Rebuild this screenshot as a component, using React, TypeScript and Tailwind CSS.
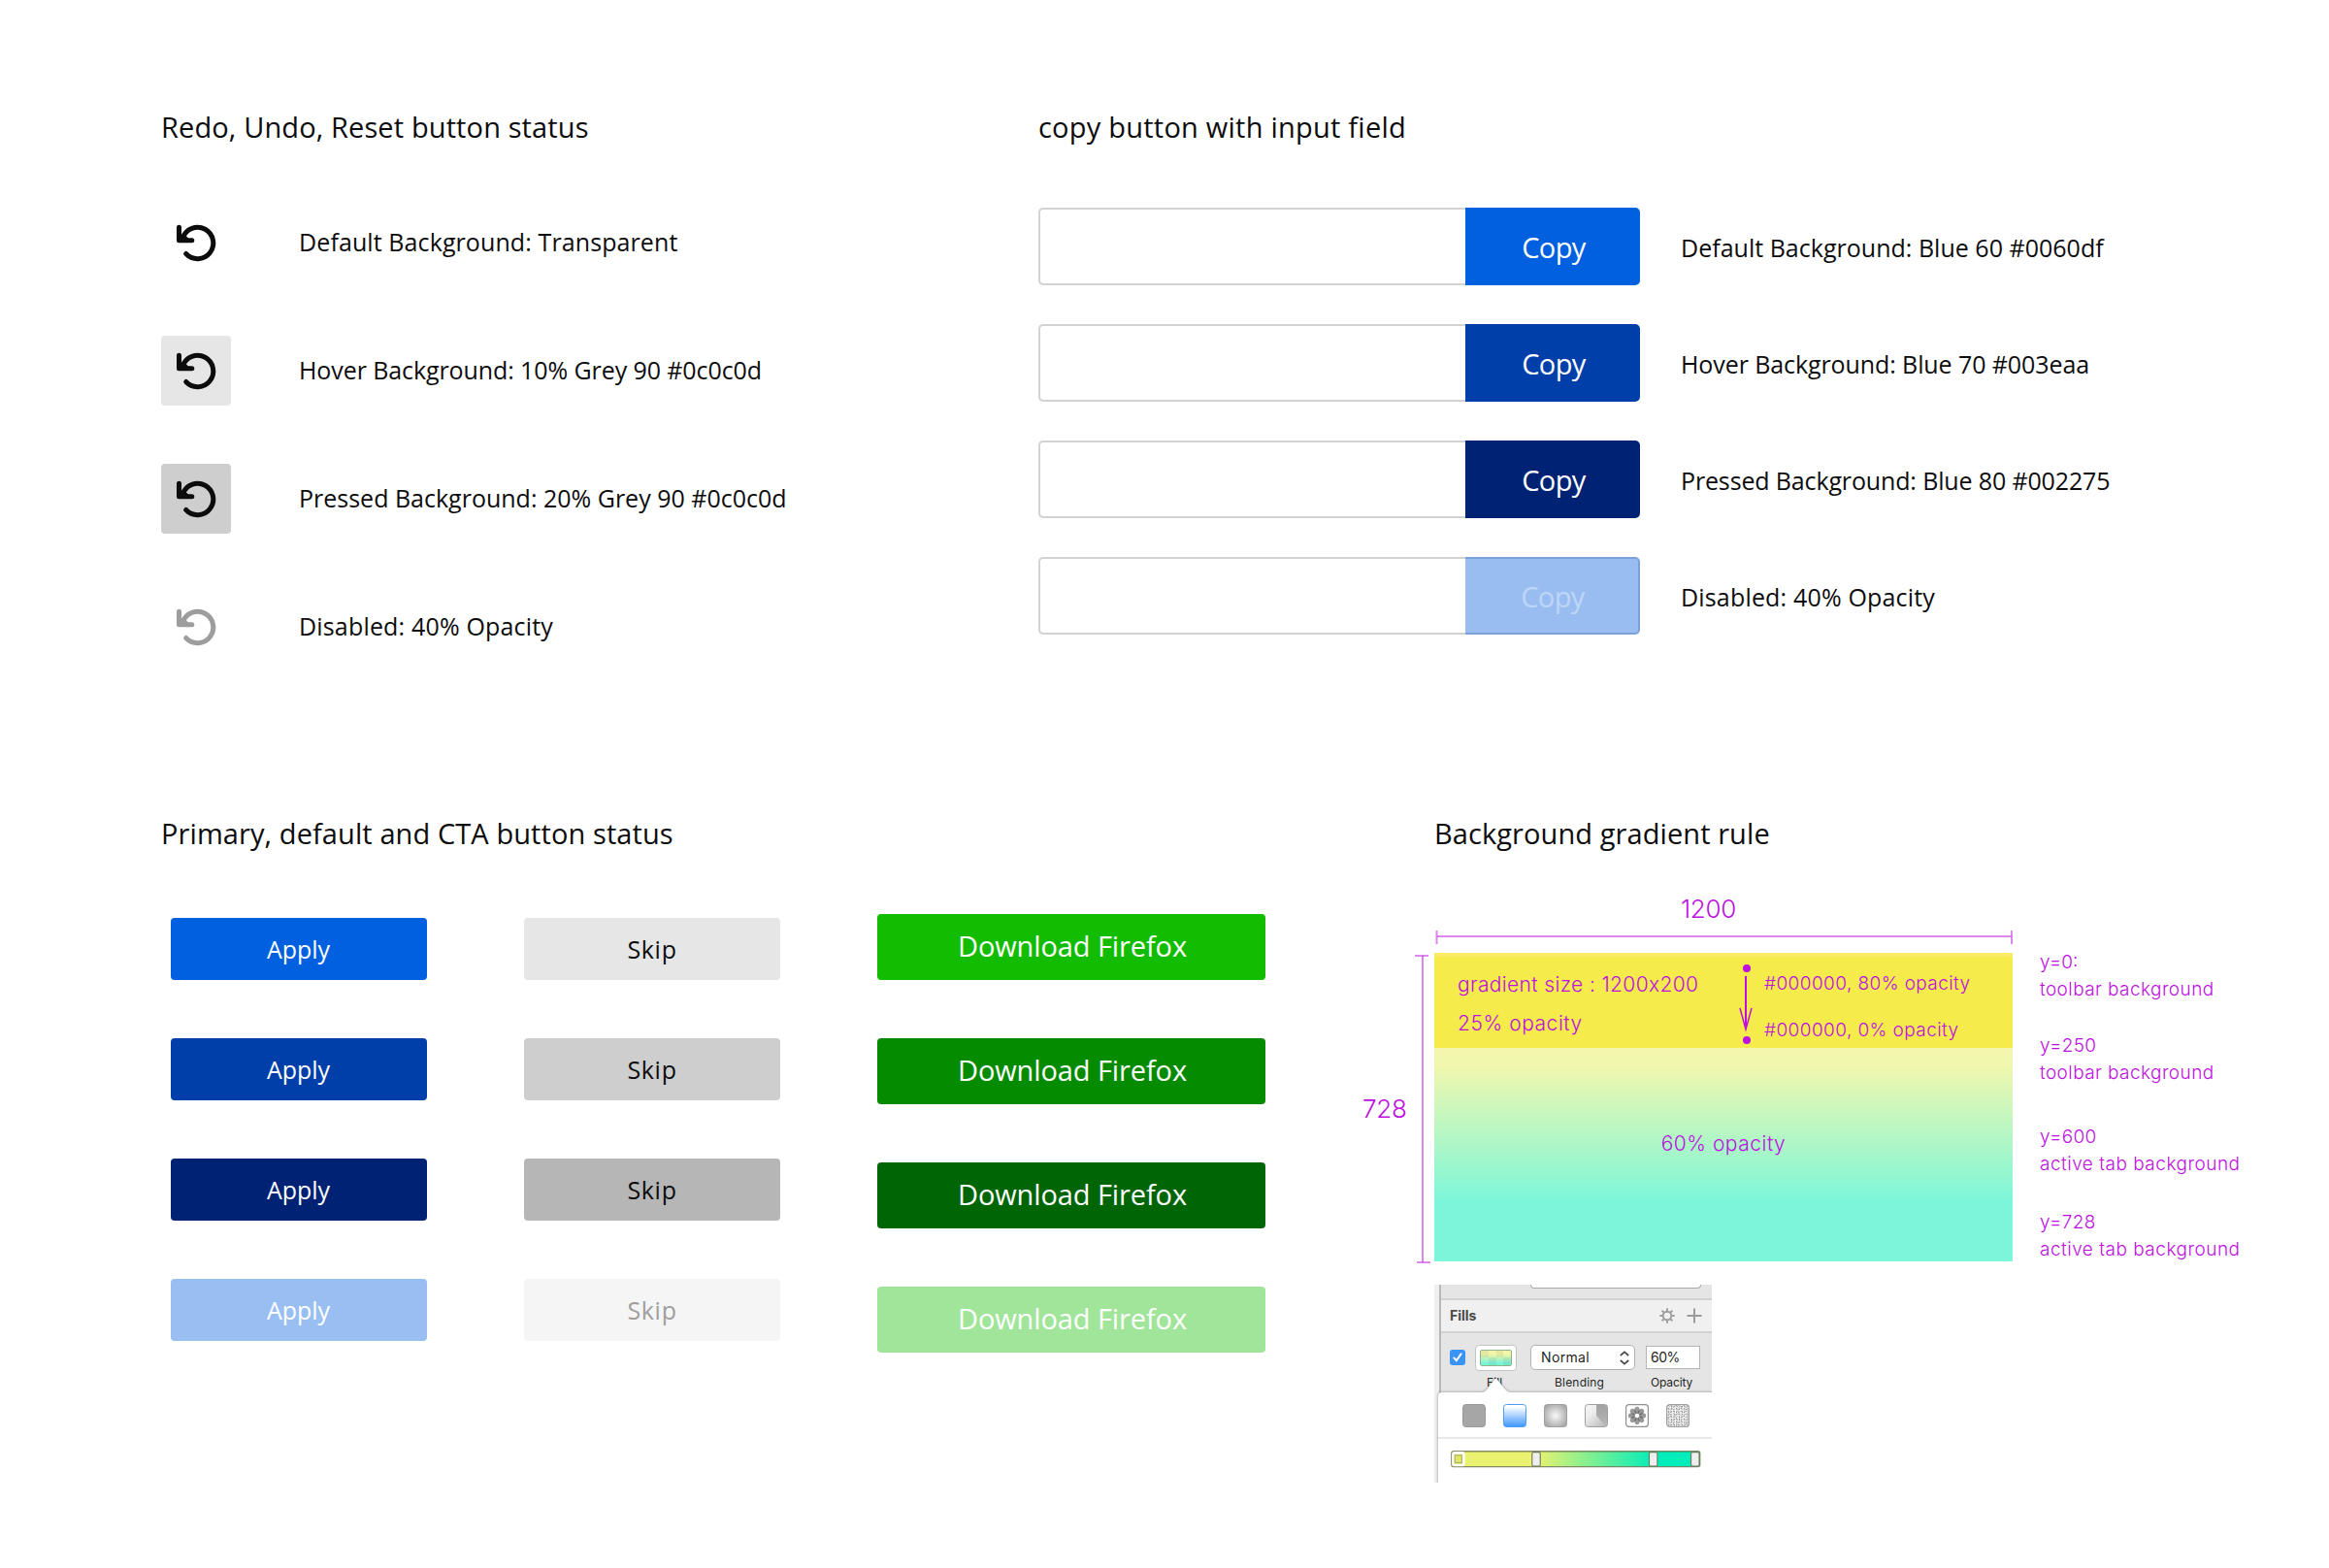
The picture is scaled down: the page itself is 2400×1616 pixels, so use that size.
import type { ReactNode } from "react";

const UI = "font-['Open_Sans',sans-serif] text-[#0c0c0d] whitespace-pre";
const NOTE = "font-['Inter',sans-serif] font-[360] text-[#bd10e0] whitespace-pre";

function Heading({ children, className = "" }: { children: ReactNode; className?: string }) {
  return <h2 className={`${UI} h-10 text-[29px] leading-10 font-normal ${className}`}>{children}</h2>;
}

function UndoIcon() {
  return (
    <svg width="72" height="72" viewBox="0 0 72 72" fill="none" stroke="#0c0c0d" strokeWidth="5" strokeLinecap="round" strokeLinejoin="round">
      <path d="M22.3 31A16.2 16.2 0 1 1 25.7 47.5" />
      <path d="M18.5 20.2V33.8H31.8" />
      <path d="M18.5 33.8V30L23 26L30 33.8Z" fill="#0c0c0d" stroke="none" />
    </svg>
  );
}

const iconRows = [
  { label: "Default Background: Transparent", box: "", icon: "", text: "tracking-[0.1px]" },
  { label: "Hover Background: 10% Grey 90 #0c0c0d", box: "bg-[#e6e6e6]", icon: "", text: "tracking-[-0.09px]" },
  { label: "Pressed Background: 20% Grey 90 #0c0c0d", box: "bg-[#cecece]", icon: "", text: "" },
  { label: "Disabled: 40% Opacity", box: "", icon: "opacity-40", text: "tracking-[0.17px]" },
];

function IconButtons() {
  return (
    <section className="w-[904px]">
      <Heading className="tracking-[0.12px]">Redo, Undo, Reset button status</Heading>
      <div className="mt-[63px] flex flex-col gap-[60px]">
        {iconRows.map((r) => (
          <div key={r.label} className="flex h-[72px] items-center">
            <div className={`size-[72px] rounded-[4px] ${r.box}`}>
              <div className={r.icon}>
                <UndoIcon />
              </div>
            </div>
            <span className={`${UI} ml-[70px] pb-[3px] text-[25px] leading-9 ${r.text}`}>{r.label}</span>
          </div>
        ))}
      </div>
    </section>
  );
}

const copyRows = [
  { label: "Default Background: Blue 60 #0060df", button: "bg-[#0060df] text-white", text: "tracking-[0.02px]" },
  { label: "Hover Background: Blue 70 #003eaa", button: "bg-[#003eaa] text-white", text: "tracking-[-0.09px]" },
  { label: "Pressed Background: Blue 80 #002275", button: "bg-[#002275] text-white", text: "tracking-[-0.14px]" },
  { label: "Disabled: 40% Opacity", button: "border-2 border-l-0 border-[#7ba2d8] bg-[#99bdf1] text-[#bdd6f7]", text: "tracking-[0.17px]" },
];

function CopyFields() {
  return (
    <section>
      <Heading className="tracking-[0.23px]">copy button with input field</Heading>
      <div className="mt-[63px] flex flex-col gap-10">
        {copyRows.map((r) => (
          <div key={r.label} className="flex h-20 items-center">
            <div className="h-20 w-[440px] rounded-l-[5px] border-2 border-r-0 border-[#d2d2d2] bg-white" />
            <button className={`flex h-20 w-[180px] items-center justify-center rounded-r-[5px] pt-[2px] pl-[2px] font-['Open_Sans',sans-serif] text-[29px] leading-10 tracking-[-0.6px] ${r.button}`}>
              Copy
            </button>
            <span className={`${UI} ml-[42px] pt-[1px] text-[25px] leading-9 ${r.text}`}>{r.label}</span>
          </div>
        ))}
      </div>
    </section>
  );
}

const applyStates = ["bg-[#0060df] text-white", "bg-[#003eaa] text-white", "bg-[#002275] text-white", "bg-[#99bff2] text-white"];
const skipStates = ["bg-[#e6e6e6] text-[#0c0c0d]", "bg-[#cecece] text-[#0c0c0d]", "bg-[#b6b6b6] text-[#0c0c0d]", "bg-[#f5f5f5] text-[#9e9e9e]"];
const downloadStates = ["bg-[#12bc00] text-white", "bg-[#058b00] text-white", "bg-[#006504] text-white", "bg-[#a0e599] text-white"];

function ButtonStates() {
  return (
    <section className="w-[1238px]">
      <Heading className="tracking-[0.09px]">Primary, default and CTA button status</Heading>
      <div className="mt-[63px] flex items-start pl-[10px]">
        <div className="mt-1 flex flex-col gap-[60px]">
          {applyStates.map((c) => (
            <button key={c} className={`h-16 w-[264px] rounded-[4px] pr-[1px] font-['Open_Sans',sans-serif] text-[25px] leading-9 ${c}`}>Apply</button>
          ))}
        </div>
        <div className="mt-1 ml-[100px] flex flex-col gap-[60px]">
          {skipStates.map((c) => (
            <button key={c} className={`h-16 w-[264px] rounded-[4px] font-['Open_Sans',sans-serif] text-[25px] leading-9 tracking-[0.7px] ${c}`}>Skip</button>
          ))}
        </div>
        <div className="ml-[100px] flex flex-col gap-[60px]">
          {downloadStates.map((c) => (
            <button key={c} className={`h-[68px] w-[400px] rounded-[4px] pb-[2px] pl-[2px] font-['Open_Sans',sans-serif] text-[29px] leading-10 tracking-[-0.1px] ${c}`}>
              Download Firefox
            </button>
          ))}
        </div>
      </div>
    </section>
  );
}

function GradientBlock() {
  return (
    <div className="h-[318px] w-[596px]">
      <div className="flex h-[98px] border-t-4 border-[#f9ed68] bg-[#f5ec4c]">
        <div className={`${NOTE} mt-[9px] ml-6 w-[290px] text-[21px] leading-10`}>
          <p className="tracking-[0.36px]">gradient size : 1200x200</p>
          <p className="tracking-[0.55px]">25% opacity</p>
        </div>
        <svg className="mt-2 flex-none" width="16" height="84" viewBox="1792 994 16 84" fill="none" stroke="#bd10e0" strokeWidth="2">
          <circle cx="1800" cy="998" r="4" fill="#bd10e0" stroke="none" />
          <circle cx="1800" cy="1072" r="4" fill="#bd10e0" stroke="none" />
          <path d="M1799 1006V1060" />
          <path d="M1793 1039L1799 1061L1805 1039" strokeWidth="1.5" />
        </svg>
        <div className={`${NOTE} mt-1 ml-[10px] text-[19px] leading-[48px]`}>
          <p className="tracking-[0.42px]">#000000, 80% opacity</p>
          <p className="tracking-[0.42px]">#000000, 0% opacity</p>
        </div>
      </div>
      <div className="h-[220px] bg-[linear-gradient(to_bottom,#f3f7ad_0%,#f1f7ae_8%,#7bf6da_73%,#7bf6da_100%)]">
        <p className={`${NOTE} pt-[84px] text-center text-[21px] leading-[30px] tracking-[0.5px]`}>60% opacity</p>
      </div>
    </div>
  );
}

const fillTypes: ReactNode[] = [
  <rect key="f" x="0.5" y="0.5" width="23" height="23" rx="3" fill="#a6a6a6" stroke="#999" />,
  <rect key="f" x="0.5" y="0.5" width="23" height="23" rx="3" fill="url(#linear-blue)" stroke="#4a9bf5" />,
  <rect key="f" x="0.5" y="0.5" width="23" height="23" rx="3" fill="url(#radial-gray)" stroke="#a0a0a0" />,
  <g key="f">
    <rect x="0.5" y="0.5" width="23" height="23" rx="3" fill="url(#angular-gray)" stroke="#a0a0a0" />
    <path d="M12 12V1H21Q23 1 23 3V21L21 22Z" fill="url(#angular-dark)" />
  </g>,
  <g key="f">
    <rect x="0.6" y="0.6" width="22.8" height="22.8" rx="3" fill="#fff" stroke="#8f8f8f" strokeWidth="1.2" />
    {[0, 45, 90, 135, 180, 225, 270, 315].map((a) => (
      <ellipse key={a} cx="12" cy="6.4" rx="2.7" ry="3.6" fill="#555" fillOpacity="0.6" transform={`rotate(${a} 12 12)`} />
    ))}
    <circle cx="12" cy="12" r="1.9" fill="#fff" />
  </g>,
  <g key="f">
    <rect x="0.6" y="0.6" width="22.8" height="22.8" rx="3" fill="#f4f4f4" stroke="#a0a0a0" strokeWidth="1.2" />
    {Array.from({ length: 64 }, (_, i) => {
      const x = 2.4 + (i % 8) * 2.7;
      const y = 2.4 + Math.floor(i / 8) * 2.7;
      const angle = (i * 67 + Math.floor(i / 8) * 41) % 180;
      return <path key={i} d={`M${x - 1} ${y}q1 -1.4 2.2 0.3`} fill="none" stroke="#858585" strokeWidth="0.9" transform={`rotate(${angle} ${x} ${y})`} />;
    })}
  </g>,
];

function FillPopover() {
  return (
    <div className="absolute top-[96px] left-[4px] h-[120px] w-[290px] [filter:drop-shadow(0_0_1.5px_rgba(0,0,0,0.4))]">
      <svg className="ml-[46px] block" width="28" height="15" viewBox="0 0 28 15">
        <path d="M0 15C5 14 10 2 13.5 1C17 2 22 14 28 15Z" fill="#fff" />
      </svg>
      <div className="h-[110px] rounded-[4px] bg-white">
        <div className="flex h-12 gap-[18px] border-b-2 border-[#e8e8e8] pt-3 pl-[25px]">
          {fillTypes.map((shape, i) => (
            <svg key={i} width="24" height="24" viewBox="0 0 24 24">
              <defs>
                <linearGradient id="linear-blue" x2="0" y2="1"><stop offset="0.1" stopColor="#fff" /><stop offset="1" stopColor="#3d97ff" /></linearGradient>
                <radialGradient id="radial-gray" r="0.6"><stop offset="0" stopColor="#f8f8f8" /><stop offset="1" stopColor="#a6a6a6" /></radialGradient>
                <linearGradient id="angular-gray" x1="0" x2="0.9" y1="0" y2="1"><stop offset="0" stopColor="#f6f6f6" /><stop offset="0.4" stopColor="#ececec" /><stop offset="1" stopColor="#b5b5b5" /></linearGradient>
                <linearGradient id="angular-dark" x2="0" y2="1"><stop offset="0" stopColor="#a2a2a2" /><stop offset="1" stopColor="#b5b5b5" /></linearGradient>
              </defs>
              {shape}
            </svg>
          ))}
        </div>
        <svg className="mt-[12px] ml-[13px] block" width="258" height="18" viewBox="0 0 258 18">
          <defs>
            <linearGradient id="stops" x2="1" y2="0">
              <stop offset="0.34" stopColor="#ebf26f" />
              <stop offset="0.82" stopColor="#00edbb" />
            </linearGradient>
          </defs>
          <rect x="0.8" y="0.8" width="255.9" height="15.8" rx="2" fill="url(#stops)" stroke="#5c6a3c" strokeOpacity="0.75" strokeWidth="1.4" />
          <rect x="2.4" y="2.4" width="11" height="12.6" rx="1.5" fill="#e3e96a" stroke="#fff" strokeWidth="2.6" />
          <rect x="4.2" y="4.8" width="7.2" height="7.8" fill="#dfe568" stroke="#a9ab5c" strokeWidth="1" />
          {[83.8, 204.5, 247.6].map((x) => (
            <rect key={x} x={x} y="1.6" width="8.4" height="14.4" rx="1.5" fill="#efefef" stroke="#6b7a5a" strokeWidth="1.1" />
          ))}
        </svg>
      </div>
    </div>
  );
}

function FillsPanel() {
  return (
    <div className="relative flex h-[204px] w-[286px] overflow-hidden font-['Inter',sans-serif] text-[#262626]">
      <div className="w-[7px] flex-none border-r-2 border-[#b9b9b9] bg-[#efefef]" />
      <div className="w-[279px] bg-[#e5e5e5]">
        <div className="h-[14px] pl-[92px]">
          <div className="h-[4px] w-[176px] rounded-b-[4px] border border-t-0 border-[#a9a9a9] bg-white" />
        </div>
        <div className="flex h-9 items-center border-y-2 border-[#d2d2d2] bg-[#f0f0f0] pl-[9px] text-[#4a4a4a]">
          <span className="w-[216px] text-[14px] leading-5 font-bold">Fills</span>
          <svg width="16" height="16" viewBox="0 0 16 16" fill="none" stroke="#9c9c9c">
            <circle cx="8" cy="8" r="4.3" strokeWidth="1.9" />
            {[0, 45, 90, 135, 180, 225, 270, 315].map((a) => (
              <path key={a} d="M8 0.3V3.2" strokeWidth="1.9" transform={`rotate(${a} 8 8)`} />
            ))}
          </svg>
          <svg className="ml-3" width="16" height="16" viewBox="0 0 16 16" stroke="#9c9c9c" strokeWidth="2">
            <path d="M8 0.5V15.5M0.5 8H15.5" />
          </svg>
        </div>
        <div className="flex h-[50px] items-center pl-[9px]">
          <div className="flex size-4 items-center justify-center rounded-[3px] bg-[#3b93f7]">
            <svg width="12" height="12" viewBox="0 0 12 12" fill="none" stroke="#fff" strokeWidth="1.9" strokeLinecap="round">
              <path d="M2.2 6.4L4.8 9.2L9.6 2.4" />
            </svg>
          </div>
          <div className="ml-[10px] h-[27px] w-[43px] rounded-[4px] border border-[#c3c3c3] bg-white p-1">
            <div className="grid h-[17px] w-[33px] grid-cols-4 overflow-hidden rounded-[2px] border border-[#8fb48b] bg-[linear-gradient(to_bottom,#f3f5a8_25%,#7df3d6_85%)]">
              <div className="h-[7px] bg-black/5" />
              <div className="h-[7px]" />
              <div className="h-[7px] bg-black/5" />
              <div className="h-[7px]" />
              <div className="h-2" />
              <div className="h-2 bg-black/5" />
              <div className="h-2" />
              <div className="h-2 bg-black/5" />
            </div>
          </div>
          <div className="ml-[14px] flex h-[26px] w-[108px] items-center justify-between rounded-[5px] border border-[#b0b0b0] bg-white pr-[5px] pl-[10px] text-[14px] leading-5">
            <span className="tracking-[0.35px]">Normal</span>
            <svg width="10" height="15" viewBox="0 0 10 15" fill="none" stroke="#4a4a4a" strokeWidth="1.7">
              <path d="M0.8 5L5 1.4L9.2 5M0.8 10L5 13.6L9.2 10" />
            </svg>
          </div>
          <div className="ml-[11px] flex h-6 w-14 items-center border border-[#b4b4b4] bg-white pl-1 text-[14px] leading-5 tracking-[-0.5px]">60%</div>
        </div>
        <div className="-mt-[8px] flex text-[12px] leading-[18px]">
          <span className="ml-[47px] w-[70px] tracking-[0.1px]">Fill</span>
          <span className="w-[99px] tracking-[0.2px]">Blending</span>
          <span className="tracking-[-0.15px]">Opacity</span>
        </div>
      </div>
      <FillPopover />
    </div>
  );
}

function GradientRule() {
  return (
    <section>
      <Heading className="ml-[74px] tracking-[0.08px]">Background gradient rule</Heading>
      <p className={`${NOTE} mt-[42px] ml-[74px] w-[565px] text-center text-[26px] leading-8 tracking-[-0.3px]`}>1200</p>
      <svg className="mt-[5px] ml-[74px] block" width="598" height="16" viewBox="1478 958 598 16" stroke="#bd10e0" strokeOpacity="0.5" strokeWidth="2">
        <path d="M1481 965H2072.5" />
        <path d="M1480.5 959V973" />
        <path d="M2073 959V973" />
      </svg>
      <div className="mt-[8px] flex items-start">
        <span className={`${NOTE} mt-[145px] w-[54px] text-[26px] leading-8 tracking-[-0.28px]`}>728</span>
        <svg width="20" height="320" viewBox="1458 982 20 320" stroke="#bd10e0" strokeOpacity="0.5" strokeWidth="2">
          <path d="M1466 985V1301" />
          <path d="M1458 985H1472" />
          <path d="M1460 1301H1474" />
        </svg>
        <GradientBlock />
        <div className={`${NOTE} -mt-1 ml-7 text-[19px] leading-7 tracking-[0.5px]`}>
          <p className="tracking-[0]">y=0:</p>
          <p className="tracking-[0.42px]">toolbar background</p>
          <p className="mt-[30px] tracking-[0.3px]">y=250</p>
          <p className="tracking-[0.42px]">toolbar background</p>
          <p className="mt-[38px] tracking-[0.3px]">y=600</p>
          <p>active tab background</p>
          <p className="mt-8 tracking-[0.3px]">y=728</p>
          <p>active tab background</p>
        </div>
      </div>
      <div className="mt-[22px] ml-[74px]">
        <FillsPanel />
      </div>
    </section>
  );
}

export default function App() {
  return (
    <main className="h-[1616px] w-[2400px] overflow-hidden bg-white pt-[111px] pl-[166px]">
      <div className="flex h-[728px]">
        <IconButtons />
        <CopyFields />
      </div>
      <div className="flex">
        <ButtonStates />
        <GradientRule />
      </div>
    </main>
  );
}
